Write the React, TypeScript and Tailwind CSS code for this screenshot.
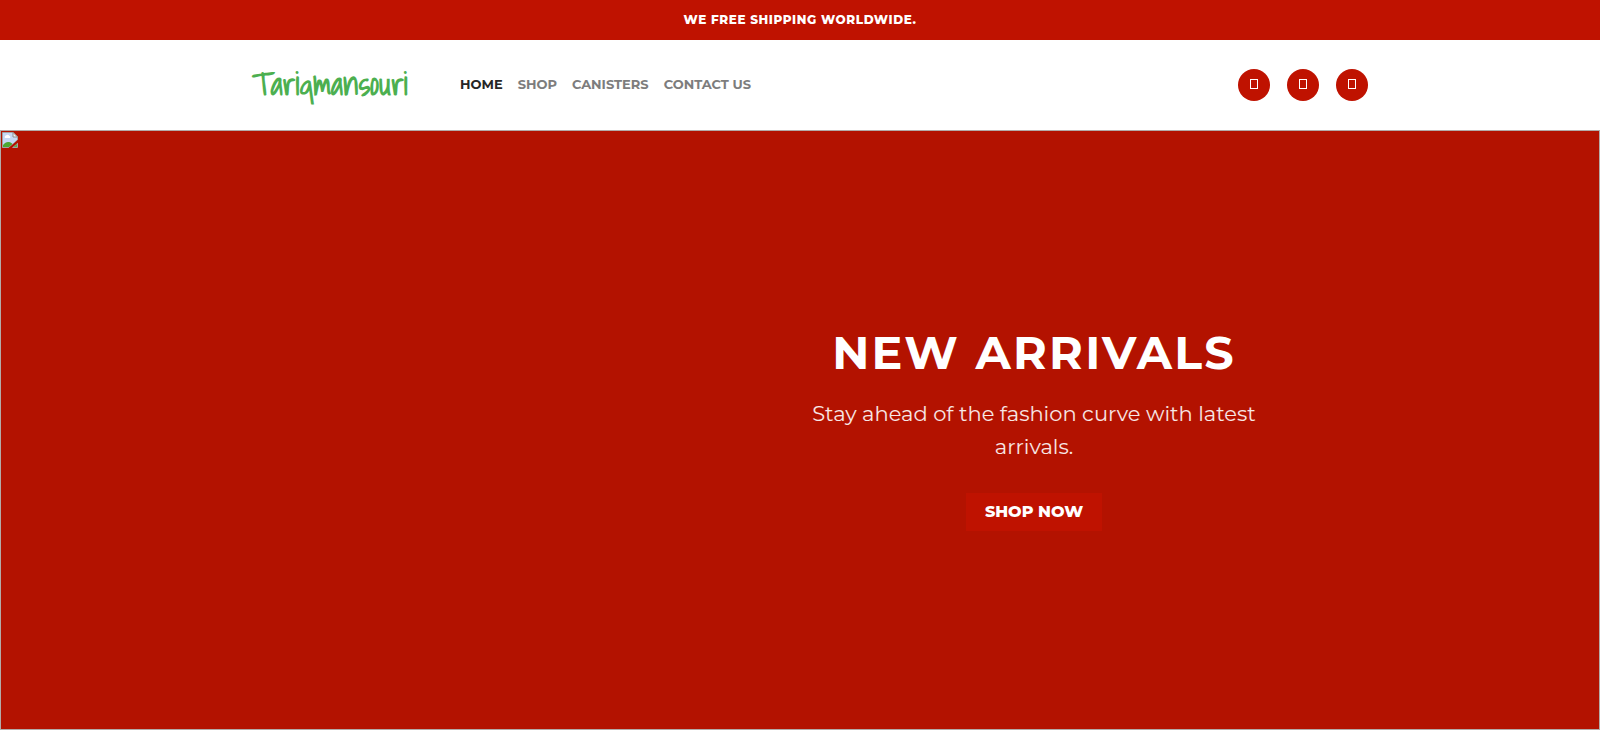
import React from 'react';

const navLinks = [
  { label: 'HOME', active: true },
  { label: 'SHOP', active: false },
  { label: 'CANISTERS', active: false },
  { label: 'CONTACT US', active: false }
];

const actions = ['Search', 'Account', 'Cart'];

const TopBar = () => (
  <div className="flex h-10 items-center justify-center bg-[#bf1200] px-4 pb-px">
    <p className="text-xs leading-5 font-extrabold tracking-wider text-white">WE FREE SHIPPING WORLDWIDE.</p>
  </div>
);

const Header = () => (
  <header className="bg-white">
    <div className="mx-auto flex min-h-[90px] max-w-[1140px] items-center justify-between pr-[2px] pl-[22px]">
      <div className="flex items-center">
        <a
          href="#home"
          className="w-[208px] pb-1 font-['Shadows_Into_Light','Indie_Flower',Caveat,cursive] text-[32px] leading-10 font-bold text-[#4caf50]"
        >
          Tariqmansouri
        </a>
        <nav className="flex gap-[15px] pb-[3px]">
          {navLinks.map((link) => (
            <a
              key={link.label}
              href="#shop"
              className={`text-[13px] leading-5 font-bold ${link.active ? 'text-[#262626]' : 'text-[#7d7d7d]'}`}
            >
              {link.label}
            </a>
          ))}
        </nav>
      </div>
      <div className="flex gap-[17px]">
        {actions.map((action) => (
          <button
            key={action}
            type="button"
            aria-label={action}
            className="flex size-8 items-center justify-center rounded-full bg-[#bf1200] pb-[2px]"
          >
            <svg width="8" height="10" viewBox="0 0 8 10" fill="none" stroke="white" strokeWidth="1">
              <rect x="0.5" y="0.5" width="7" height="9" />
            </svg>
          </button>
        ))}
      </div>
    </div>
  </header>
);

const ImagePlaceholder = () => (
  <svg width="16" height="16" viewBox="0 0 16 16" className="absolute top-px left-px">
    <path d="M0.5 0.5H11L15.5 5V8L7 15.5H0.5Z" fill="#c6d8f5" stroke="#a3a3a3" />
    <path d="M3 6a1.5 1.5 0 0 1 1-2.400a2 2 0 0 1 3.500 0.400a1.200 1.200 0 0 1 0.500 2Z" fill="white" />
    <path d="M1 15V13C3 10.500 5 9.500 7 10C8.500 10.300 9.500 11 10.500 12L7 15Z" fill="#4ca832" />
    <path d="M11 0.500V5H15.500Z" fill="#f4f4f4" stroke="#8f8f8f" />
    <path d="M10.500 15.500L15.500 11V15.500Z" fill="#5fae45" stroke="#a3a3a3" />
    <path d="M6.500 16L16 8V10.500L9.500 16Z" fill="#b31200" />
  </svg>
);

const Hero = () => (
  <section className="relative flex min-h-[600px] items-center border border-[#b3aaa8] bg-[#b31200]">
    <ImagePlaceholder />
    <div className="mx-auto mb-1 w-full max-w-[1140px]">
      <div className="ml-[50%] flex max-w-[468px] flex-col items-center text-center">
        <h1 className="mb-4 text-[46px] leading-[56px] font-bold tracking-wider whitespace-nowrap text-white">
          NEW ARRIVALS
        </h1>
        <p className="mb-[30px] text-[21px] leading-[33px] text-white/90">
          Stay ahead of the fashion curve with latest arrivals.
        </p>
        <a href="#shop" className="flex h-[38px] items-center bg-[#bf1200] px-[19px] text-base font-extrabold text-white">
          SHOP NOW
        </a>
      </div>
    </div>
  </section>
);

const App = () => (
  <main className="bg-white font-[Montserrat,Inter,sans-serif]">
    <TopBar />
    <Header />
    <Hero />
  </main>
);

export default App;
